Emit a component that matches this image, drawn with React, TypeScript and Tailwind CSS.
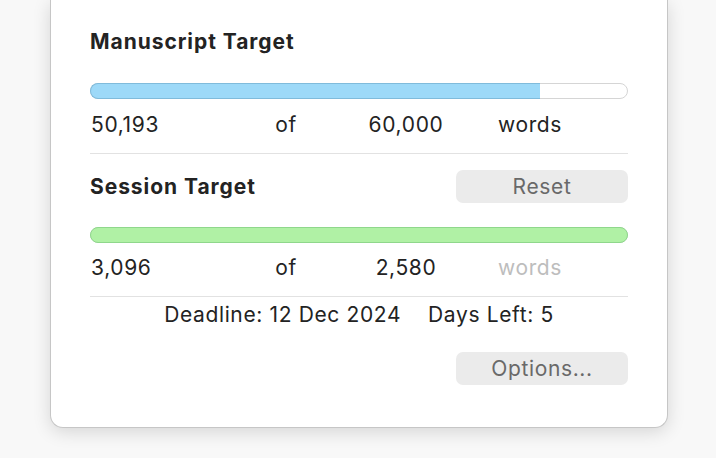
import React from "react";

type Row = { value: string; target: string; wordsMuted?: boolean };

function Bar({ pct, fill, edge }: { pct: number; fill: string; edge: string }) {
  return (
    <div className="relative h-[16px] w-full">
      <div className="absolute inset-0 rounded-full border-[1.5px] border-[#d5d5d5] bg-white" />
      <div
        className={"absolute inset-y-0 left-0 border-[1.5px] " + fill + " " + edge + (pct >= 100 ? " rounded-full" : " rounded-l-full border-r-0")}
        style={{ width: pct + "%" }}
      />
    </div>
  );
}

function Counts({ value, target, wordsMuted }: Row) {
  return (
    <div className="flex h-[26px] items-center leading-[26px]">
      <span className="w-[136px] pl-px">{value}</span>
      <span className="w-[120px] text-center">of</span>
      <span className="w-[120px] text-center">{target}</span>
      <span className={"w-[128px] text-center " + (wordsMuted ? "text-[#bdbdbd]" : "")}>words</span>
    </div>
  );
}

function MacButton({ children }: { children: React.ReactNode }) {
  return (
    <button className="h-[33px] w-[172px] rounded-[7px] bg-[#ebebeb] text-[21px] leading-[33px] tracking-[0.03em] text-[#696969]">
      {children}
    </button>
  );
}

export default function App() {
  return (
    <div className="h-[458px] w-[716px] overflow-hidden bg-[#f8f8f8] pl-[50px] font-['Inter',sans-serif] text-[21px] tracking-[0.03em] text-[#232323]">
      <div className="flex h-[428px] w-[618px] flex-col rounded-b-[13px] border border-t-0 border-[#c6c6c6] bg-white px-[39px] pt-[29px] shadow-[0_4px_18px_rgba(0,0,0,0.14)]">
        <h2 className="h-[26px] text-[21px] font-bold leading-[26px] tracking-[0.045em]">Manuscript Target</h2>

        <div className="mt-[28px]">
          <Bar pct={83.66} fill="bg-[#9dd9f8]" edge="border-[#80bbdb]" />
        </div>
        <div className="mt-[13px]">
          <Counts value="50,193" target="60,000" />
        </div>

        <div className="mt-[15px] h-px bg-[#e2e2e2]" />

        <div className="mt-[16px] flex items-center justify-between">
          <h2 className="h-[26px] text-[21px] font-bold leading-[26px] tracking-[0.045em]">Session Target</h2>
          <MacButton>Reset</MacButton>
        </div>

        <div className="mt-[24px]">
          <Bar pct={100} fill="bg-[#b0f1a5]" edge="border-[#8fd78c]" />
        </div>
        <div className="mt-[12px]">
          <Counts value="3,096" target="2,580" wordsMuted />
        </div>

        <div className="mt-[15px] h-px bg-[#e2e2e2]" />

        <div className="mt-[5px] flex h-[26px] justify-center gap-[27px] leading-[26px]">
          <span>Deadline: 12 Dec 2024</span>
          <span>Days Left: 5</span>
        </div>

        <div className="mt-[24px] flex justify-end">
          <MacButton>Options...</MacButton>
        </div>
      </div>
    </div>
  );
}
